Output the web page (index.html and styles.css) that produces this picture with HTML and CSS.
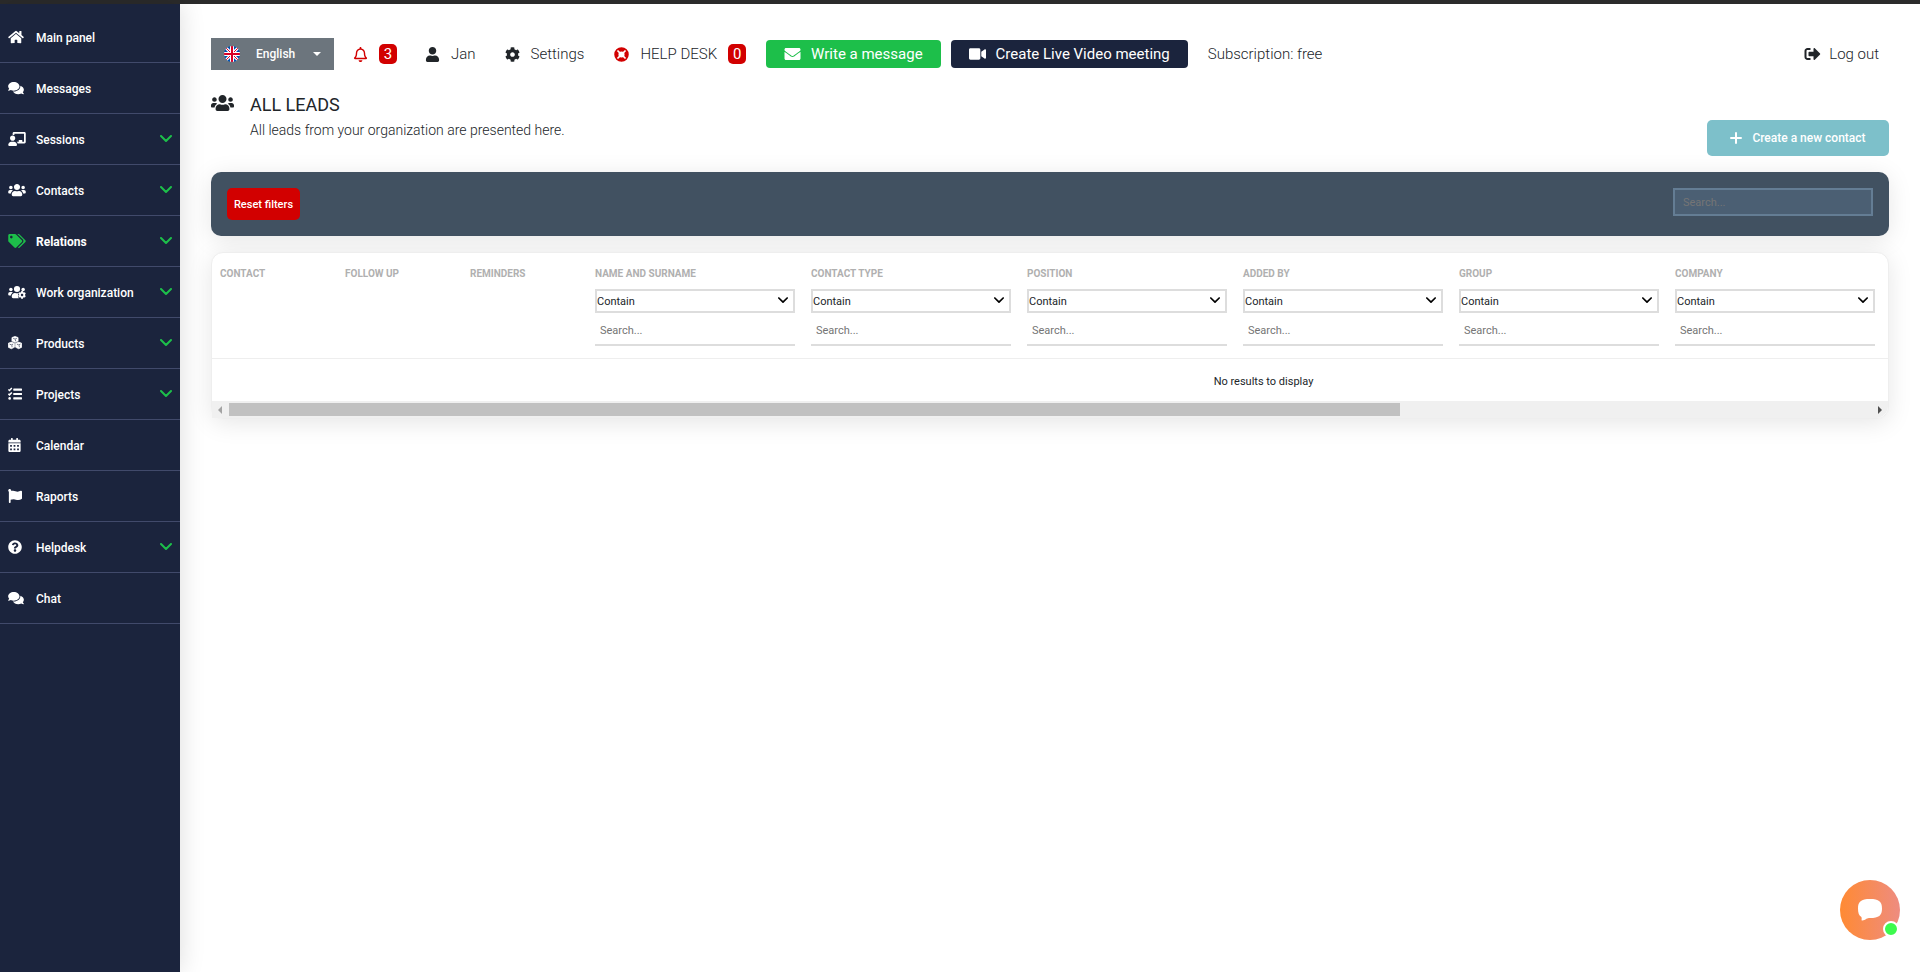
FILE: index.html
```html
<!DOCTYPE html>
<html lang="en">
<head>
<meta charset="utf-8">
<title>All leads</title>
<link rel="stylesheet" href="styles.css">
</head>
<body>
<svg class="sprite" aria-hidden="true">
  <symbol id="home" viewBox="0 0 576 512"><path d="M280.37 148.26L96 300.11V464a16 16 0 0 0 16 16l112.06-.29a16 16 0 0 0 15.92-16V368a16 16 0 0 1 16-16h64a16 16 0 0 1 16 16v95.64a16 16 0 0 0 16 16.05L464 480a16 16 0 0 0 16-16V300L295.67 148.26a12.19 12.19 0 0 0-15.3 0zM571.6 251.47L488 182.56V44.05a12 12 0 0 0-12-12h-56a12 12 0 0 0-12 12v72.61L318.47 43a48 48 0 0 0-61 0L4.34 251.47a12 12 0 0 0-1.6 16.9l25.5 31A12 12 0 0 0 45.15 301l235.22-193.74a12.19 12.19 0 0 1 15.3 0L530.9 301a12 12 0 0 0 16.9-1.6l25.5-31a12 12 0 0 0-1.7-16.93z"/></symbol>
  <symbol id="comments" viewBox="0 0 576 512"><path d="M416 192c0-88.4-93.1-160-208-160S0 103.6 0 192c0 34.3 14.1 65.9 38 92-13.4 30.2-35.5 54.2-35.8 54.5-2.2 2.3-2.8 5.7-1.5 8.7S4.8 352 8 352c36.6 0 66.9-12.3 88.7-25 32.2 15.7 70.3 25 111.3 25 114.9 0 208-71.6 208-160zm122 220c23.9-26 38-57.7 38-92 0-66.9-53.5-124.2-129.3-148.1.9 6.6 1.3 13.3 1.3 20.1 0 105.9-107.7 192-240 192-10.8 0-21.3-.8-31.7-1.9C207.8 439.6 281.8 480 368 480c41 0 79.1-9.2 111.3-25 21.8 12.7 52.1 25 88.7 25 3.2 0 6.1-1.9 7.3-4.8 1.3-2.9.7-6.3-1.5-8.7-.3-.3-22.4-24.2-35.8-54.5z"/></symbol>
  <symbol id="teacher" viewBox="0 0 640 512"><path d="M208 352c-2.39 0-4.78.35-7.06 1.09C187.98 357.3 174.35 360 160 360c-14.35 0-27.98-2.7-40.95-6.91-2.28-.74-4.66-1.09-7.05-1.09C49.94 352-.33 402.48 0 464.62.14 490.88 21.73 512 48 512h224c26.27 0 47.86-21.12 48-47.38.33-62.14-49.94-112.62-112-112.62zm-48-32c53.02 0 96-42.98 96-96s-42.98-96-96-96-96 42.98-96 96 42.98 96 96 96zM592 0H208c-26.47 0-48 22.25-48 49.59V96c23.42 0 45.1 6.78 64 17.8V64h352v288h-64v-64H384v64h-76.24c19.1 16.69 33.12 38.73 39.69 64H592c26.47 0 48-22.25 48-49.59V49.59C640 22.25 618.47 0 592 0z"/></symbol>
  <symbol id="users" viewBox="0 0 640 512"><path d="M96 224c35.3 0 64-28.7 64-64s-28.7-64-64-64-64 28.7-64 64 28.7 64 64 64zm448 0c35.3 0 64-28.7 64-64s-28.7-64-64-64-64 28.7-64 64 28.7 64 64 64zm32 32h-64c-17.6 0-33.5 7.1-45.1 18.6 40.3 22.1 68.9 62 75.1 109.4h66c17.7 0 32-14.3 32-32v-32c0-35.3-28.7-64-64-64zm-256 0c61.9 0 112-50.1 112-112S381.9 32 320 32 208 82.1 208 144s50.1 112 112 112zm76.8 32h-8.3c-20.8 10-43.9 16-68.5 16s-47.6-6-68.5-16h-8.3C179.6 288 128 339.6 128 403.2V432c0 26.5 21.5 48 48 48h288c26.5 0 48-21.5 48-48v-28.8c0-63.6-51.6-115.2-115.2-115.2zm-223.7-13.4C161.5 263.1 145.6 256 128 256H64c-35.3 0-64 28.7-64 64v32c0 17.7 14.3 32 32 32h65.9c6.3-47.4 34.9-87.3 75.2-109.4z"/></symbol>
  <symbol id="tags" viewBox="0 0 640 512"><path d="M497.941 225.941L286.059 14.059A48 48 0 0 0 252.118 0H48C21.49 0 0 21.49 0 48v204.118a48 48 0 0 0 14.059 33.941l211.882 211.882c18.744 18.745 49.136 18.746 67.882 0l204.118-204.118c18.745-18.745 18.745-49.137 0-67.882zM112 160c-26.51 0-48-21.49-48-48s21.49-48 48-48 48 21.49 48 48-21.49 48-48 48zm513.941 133.823L421.823 497.941c-18.745 18.745-49.137 18.745-67.882 0l-.36-.36L527.64 323.522c16.999-16.999 26.36-39.6 26.36-63.64s-9.362-46.641-26.36-63.64L331.397 0h48.721a48 48 0 0 1 33.941 14.059l211.882 211.882c18.745 18.745 18.745 49.137 0 67.882z"/></symbol>
  <symbol id="cog" viewBox="0 0 512 512"><path d="M487.4 315.7l-42.6-24.6c4.3-23.2 4.3-47 0-70.2l42.6-24.6c4.9-2.8 7.1-8.6 5.5-14-11.1-35.6-30-67.8-54.7-94.6-3.8-4.1-10-5.1-14.8-2.3L380.8 110c-17.9-15.4-38.5-27.3-60.8-35.1V25.8c0-5.6-3.9-10.5-9.4-11.7-36.7-8.2-74.3-7.8-109.2 0-5.5 1.2-9.4 6.1-9.4 11.7V75c-22.2 7.9-42.8 19.8-60.8 35.1L88.7 85.5c-4.9-2.8-11-1.9-14.8 2.3-24.7 26.7-43.6 58.9-54.7 94.6-1.7 5.4.6 11.2 5.5 14L67.3 221c-4.3 23.2-4.3 47 0 70.2l-42.6 24.6c-4.9 2.8-7.1 8.6-5.5 14 11.1 35.6 30 67.8 54.7 94.6 3.8 4.1 10 5.1 14.8 2.3l42.6-24.6c17.9 15.4 38.5 27.3 60.8 35.1v49.2c0 5.6 3.9 10.5 9.4 11.7 36.7 8.2 74.3 7.8 109.2 0 5.5-1.2 9.4-6.1 9.4-11.7v-49.2c22.2-7.9 42.8-19.8 60.8-35.1l42.6 24.6c4.9 2.8 11 1.9 14.8-2.3 24.7-26.7 43.6-58.9 54.7-94.6 1.5-5.5-.7-11.3-5.6-14.1zM256 336c-44.1 0-80-35.9-80-80s35.9-80 80-80 80 35.9 80 80-35.9 80-80 80z"/></symbol>
  <symbol id="users-cog" viewBox="0 0 640 512"><circle cx="96" cy="160" r="64"/><circle cx="544" cy="160" r="64"/><circle cx="320" cy="144" r="112"/><path d="M173 274.600C161.500 263.100 145.600 256 128 256H64c-35.300 0-64 28.700-64 64v32c0 17.700 14.300 32 32 32h66c6.300-47.400 34.900-87.300 75-109.400zM252 288h-9C180 288 128 340 128 403v29c0 26.500 21.500 48 48 48h212c-10-10-17-24-24-40-10-18-6-30 6-40l10-8v-20l-10-8c-12-10-14-22-8-40 6-12 10-22 16-32-19 8-40 12-58 12-25 0-47-6-68-16z"/><svg x="360" y="218" width="290" height="290" viewBox="0 0 512 512"><use href="#cog"/></svg></symbol>
  <symbol id="cubes" viewBox="0 0 512 512"><path d="M256 14l112 44v126l-112 52-112-52V58zM122 222l114 46v142l-114 56L8 410V268zM390 222l114 46v142l-114 56-114-56V268z" stroke="currentColor" stroke-width="26" stroke-linejoin="round"/><path d="M190 88l66 26 66-26M276 190v-60M56 296l66 28 66-28M146 410v-70M324 296l66 28 66-28M414 410v-70" fill="none" class="cut" stroke-width="22"/></symbol>
  <symbol id="tasks" viewBox="0 0 512 512"><path d="M208 56h288a16 16 0 0 1 16 16v48a16 16 0 0 1-16 16H208a16 16 0 0 1-16-16V72a16 16 0 0 1 16-16zM208 216h288a16 16 0 0 1 16 16v48a16 16 0 0 1-16 16H208a16 16 0 0 1-16-16v-48a16 16 0 0 1 16-16zM208 376h288a16 16 0 0 1 16 16v48a16 16 0 0 1-16 16H208a16 16 0 0 1-16-16v-48a16 16 0 0 1 16-16z"/><circle cx="60" cy="416" r="48"/><path d="M14 88l40 40 86-88M14 248l40 40 86-88" fill="none" stroke="currentColor" stroke-width="54"/></symbol>
  <symbol id="calendar" viewBox="0 0 448 512"><path fill-rule="evenodd" d="M0 464c0 26.500 21.500 48 48 48h352c26.500 0 48-21.500 48-48V192H0zM64 256h64v64H64zM192 256h64v64h-64zM320 256h64v64h-64zM64 384h64v64H64zM192 384h64v64h-64zM320 384h64v64h-64zM400 64h-48V16c0-8.800-7.200-16-16-16h-32c-8.800 0-16 7.200-16 16v48H160V16c0-8.800-7.200-16-16-16h-32c-8.800 0-16 7.200-16 16v48H48C21.500 64 0 85.500 0 112v48h448v-48c0-26.500-21.500-48-48-48z"/></symbol>
  <symbol id="flag" viewBox="0 0 512 512"><path d="M349.565 98.783C295.978 98.783 251.721 64 184.348 64c-24.955 0-47.309 4.384-68.045 12.013a55.947 55.947 0 0 0 3.586-23.562C118.117 24.015 94.806 1.206 66.338.048 34.345-1.254 8 24.296 8 56c0 19.026 9.497 35.825 24 45.945V488c0 13.255 10.745 24 24 24h16c13.255 0 24-10.745 24-24v-94.4c28.311-12.064 63.582-22.122 114.435-22.122 53.588 0 97.844 34.783 165.217 34.783 48.169 0 86.667-16.294 122.505-40.858C506.84 359.452 512 349.571 512 339.045v-243.1c0-23.393-24.269-38.87-45.485-29.016-34.338 15.948-76.454 31.854-116.95 31.854z"/></symbol>
  <symbol id="question" viewBox="0 0 512 512"><path d="M504 256c0 136.997-111.043 248-248 248S8 392.997 8 256C8 119.083 119.043 8 256 8s248 111.083 248 248zM262.655 90c-54.497 0-89.255 22.957-116.549 63.758-3.536 5.286-2.353 12.415 2.715 16.258l34.699 26.31c5.205 3.947 12.621 3.008 16.665-2.122 17.864-22.658 30.113-35.797 57.303-35.797 20.429 0 45.698 13.148 45.698 32.958 0 14.976-12.363 22.667-32.534 33.976C247.128 238.528 216 254.941 216 296v4c0 6.627 5.373 12 12 12h56c6.627 0 12-5.373 12-12v-1.333c0-28.462 83.186-29.647 83.186-106.667 0-58.002-60.165-102-116.531-102zM256 338c-25.365 0-46 20.635-46 46 0 25.364 20.635 46 46 46s46-20.636 46-46c0-25.365-20.635-46-46-46z"/></symbol>
  <symbol id="user" viewBox="0 0 448 512"><path d="M224 256c70.7 0 128-57.3 128-128S294.7 0 224 0 96 57.3 96 128s57.3 128 128 128zm89.6 32h-16.7c-22.2 10.2-46.9 16-72.9 16s-50.6-5.8-72.9-16h-16.7C60.2 288 0 348.2 0 422.4V464c0 26.5 21.5 48 48 48h352c26.5 0 48-21.5 48-48v-41.6c0-74.2-60.2-134.4-134.4-134.4z"/></symbol>
  <symbol id="bell" viewBox="0 0 448 512"><path d="M439.39 362.29c-19.32-20.76-55.47-51.99-55.47-154.29 0-77.7-54.48-139.9-127.94-155.16V32c0-17.67-14.32-32-31.98-32s-31.98 14.33-31.98 32v20.84C118.56 68.1 64.08 130.3 64.08 208c0 102.3-36.15 133.53-55.47 154.29-6 6.45-8.66 14.16-8.61 21.71.11 16.4 12.98 32 32.1 32h383.8c19.12 0 32-15.6 32.1-32 .05-7.55-2.61-15.27-8.61-21.71zM67.53 368c21.22-27.97 44.42-74.33 44.53-159.42 0-.2-.06-.38-.06-.58 0-61.86 50.14-112 112-112s112 50.14 112 112c0 .2-.06.38-.06.58.11 85.1 23.31 131.46 44.53 159.42H67.53zM224 512c35.32 0 63.97-28.65 63.97-64H160.03c0 35.35 28.65 64 63.97 64z"/></symbol>
  <symbol id="ring" viewBox="0 0 512 512"><circle cx="256" cy="256" r="176" fill="none" stroke="currentColor" stroke-width="144"/><path d="M118 118l80 80M394 118l-80 80M118 394l80-80M394 394l-80-80" fill="none" stroke="#fff" stroke-width="56"/></symbol>
  <symbol id="envelope" viewBox="0 0 512 512"><path d="M502.3 190.8c3.9-3.1 9.7-.2 9.7 4.7V400c0 26.5-21.5 48-48 48H48c-26.5 0-48-21.5-48-48V195.6c0-5 5.7-7.8 9.7-4.7 22.4 17.4 52.1 39.5 154.1 113.6 21.1 15.4 56.7 47.8 92.2 47.6 35.7.3 72-32.8 92.3-47.6 102-74.1 131.6-96.3 154-113.7zM256 320c23.2.4 56.6-29.2 73.4-41.4 132.7-96.3 142.8-104.7 173.4-128.7 5.8-4.5 9.2-11.5 9.2-18.9v-19c0-26.5-21.5-48-48-48H48c-26.5 0-48 21.5-48 48v19c0 7.4 3.4 14.3 9.2 18.9 30.6 23.9 40.7 32.4 173.4 128.7 16.8 12.2 50.2 41.8 73.4 41.4z"/></symbol>
  <symbol id="video" viewBox="0 0 576 512"><path d="M336.2 64H47.8C21.4 64 0 85.4 0 111.8v288.4C0 426.6 21.4 448 47.8 448h288.4c26.4 0 47.8-21.4 47.8-47.8V111.8c0-26.4-21.4-47.8-47.8-47.8zm189.4 37.7L416 177.3v157.4l109.6 75.5c21.2 14.6 50.4-.3 50.4-25.8V127.5c0-25.4-29.1-40.4-50.4-25.8z"/></symbol>
  <symbol id="signout" viewBox="0 0 512 512"><path d="M497 273L329 441c-15 15-41 4.500-41-17v-96H152c-13.300 0-24-10.700-24-24v-96c0-13.300 10.700-24 24-24h136V88c0-21.400 25.900-32 41-17l168 168c9.300 9.400 9.300 24.600 0 34zM192 436v-40c0-6.600-5.400-12-12-12H96c-17.700 0-32-14.300-32-32V160c0-17.700 14.300-32 32-32h84c6.600 0 12-5.400 12-12V76c0-6.600-5.400-12-12-12H96c-53 0-96 43-96 96v192c0 53 43 96 96 96h84c6.600 0 12-5.400 12-12z"/></symbol>
  <symbol id="plus" viewBox="0 0 12 12"><path d="M6 1v10M1 6h10" stroke="currentColor" stroke-width="2" stroke-linecap="round"/></symbol>
  <symbol id="chevron" viewBox="0 0 12 8"><path d="M1 1l5 5 5-5" fill="none" stroke="currentColor" stroke-width="2" stroke-linecap="round" stroke-linejoin="round"/></symbol>
  <symbol id="flag-uk" viewBox="0 0 16 16"><clipPath id="disc"><circle cx="8" cy="8" r="8"/></clipPath><g clip-path="url(#disc)" fill="none"><path d="M0 0h16v16H0z" fill="#0052b4"/><path d="M1 1l14 14M15 1L1 15" stroke="#fff" stroke-width="3"/><path d="M1 1l14 14M15 1L1 15" stroke="#d80027" stroke-width="1"/><path d="M8 0v16M0 8h16" stroke="#fff" stroke-width="4"/><path d="M8 0v16M0 8h16" stroke="#d80027" stroke-width="2"/></g></symbol>
  <symbol id="bubble" viewBox="0 0 24 22"><path d="M12 0c9 0 12 2.500 12 9.500S21 19 12 19c-1.500 0-2.600.1-3.600.8-1.400 1-3 1.900-4.400 1.700-1-.2.2-1.500-.6-3.500C1 16.500 0 14 0 9.500 0 2.500 3 0 12 0z"/></symbol>
</svg>
<div class="top-strip"></div>
<div class="app">
  <nav class="sidebar" aria-label="Main menu">
    <a class="item" href="#"><svg class="icon w16"><use href="#home"/></svg><span>Main panel</span></a>
    <a class="item" href="#"><svg class="icon w16"><use href="#comments"/></svg><span>Messages</span></a>
    <a class="item" href="#"><svg class="icon w18"><use href="#teacher"/></svg><span>Sessions</span><svg class="chev"><use href="#chevron"/></svg></a>
    <a class="item" href="#"><svg class="icon w18"><use href="#users"/></svg><span>Contacts</span><svg class="chev"><use href="#chevron"/></svg></a>
    <a class="item active" href="#"><svg class="icon w18"><use href="#tags"/></svg><span>Relations</span><svg class="chev"><use href="#chevron"/></svg></a>
    <a class="item" href="#"><svg class="icon w18"><use href="#users-cog"/></svg><span>Work organization</span><svg class="chev"><use href="#chevron"/></svg></a>
    <a class="item" href="#"><svg class="icon w14"><use href="#cubes"/></svg><span>Products</span><svg class="chev"><use href="#chevron"/></svg></a>
    <a class="item" href="#"><svg class="icon w14"><use href="#tasks"/></svg><span>Projects</span><svg class="chev"><use href="#chevron"/></svg></a>
    <a class="item" href="#"><svg class="icon w13"><use href="#calendar"/></svg><span>Calendar</span></a>
    <a class="item" href="#"><svg class="icon w14"><use href="#flag"/></svg><span>Raports</span></a>
    <a class="item" href="#"><svg class="icon w14"><use href="#question"/></svg><span>Helpdesk</span><svg class="chev"><use href="#chevron"/></svg></a>
    <a class="item" href="#"><svg class="icon w16"><use href="#comments"/></svg><span>Chat</span></a>
  </nav>
  <main class="main">
    <header class="topbar">
      <button class="lang" type="button"><svg class="flag"><use href="#flag-uk"/></svg><span>English</span><i class="caret"></i></button>
      <a class="link bell" href="#" aria-label="Notifications"><svg class="ticon red"><use href="#bell"/></svg><span class="badge">3</span></a>
      <a class="link jan" href="#"><svg class="ticon"><use href="#user"/></svg>Jan</a>
      <a class="link settings" href="#"><svg class="ticon"><use href="#cog"/></svg>Settings</a>
      <a class="link help" href="#"><svg class="ticon red"><use href="#ring"/></svg>HELP DESK<span class="badge">0</span></a>
      <button class="pill green" type="button"><svg class="picon"><use href="#envelope"/></svg>Write a message</button>
      <button class="pill navy" type="button"><svg class="picon"><use href="#video"/></svg>Create Live Video meeting</button>
      <span class="plan">Subscription: free</span>
      <a class="link logout" href="#"><svg class="picon"><use href="#signout"/></svg>Log out</a>
    </header>
    <div class="heading">
      <svg class="hicon"><use href="#users"/></svg>
      <div class="titles"><h1>ALL LEADS</h1><p>All leads from your organization are presented here.</p></div>
      <button class="create" type="button"><svg class="plus"><use href="#plus"/></svg>Create a new contact</button>
    </div>
    <div class="filters">
      <button class="reset" type="button">Reset filters</button>
      <input class="global-search" type="text" placeholder="Search..." aria-label="Search">
    </div>
    <section class="card">
      <div class="scroller">
        <table>
          <thead><tr>
            <th class="narrow">CONTACT</th><th class="narrow">FOLLOW UP</th><th class="narrow">REMINDERS</th>
            <th><label for="f1">NAME AND SURNAME</label><span class="sel"><select id="f1"><option>Contain</option></select><svg><use href="#chevron"/></svg></span><input type="text" placeholder="Search..." aria-label="Name and surname"></th>
            <th><label for="f2">CONTACT TYPE</label><span class="sel"><select id="f2"><option>Contain</option></select><svg><use href="#chevron"/></svg></span><input type="text" placeholder="Search..." aria-label="Contact type"></th>
            <th><label for="f3">POSITION</label><span class="sel"><select id="f3"><option>Contain</option></select><svg><use href="#chevron"/></svg></span><input type="text" placeholder="Search..." aria-label="Position"></th>
            <th><label for="f4">ADDED BY</label><span class="sel"><select id="f4"><option>Contain</option></select><svg><use href="#chevron"/></svg></span><input type="text" placeholder="Search..." aria-label="Added by"></th>
            <th><label for="f5">GROUP</label><span class="sel"><select id="f5"><option>Contain</option></select><svg><use href="#chevron"/></svg></span><input type="text" placeholder="Search..." aria-label="Group"></th>
            <th><label for="f6">COMPANY</label><span class="sel"><select id="f6"><option>Contain</option></select><svg><use href="#chevron"/></svg></span><input type="text" placeholder="Search..." aria-label="Company"></th>
            <th></th><th></th>
          </tr></thead>
          <tbody><tr><td colspan="11">No results to display</td></tr></tbody>
        </table>
      </div>
      <div class="scrollbar"><i class="arrow left"></i><div class="track"><div class="thumb"></div></div><i class="arrow right"></i></div>
    </section>
  </main>
</div>
<button class="chat" type="button" aria-label="Open chat"><svg><use href="#bubble"/></svg><i class="online"></i></button>
</body>
</html>
```
FILE: styles.css
```css
* { box-sizing: border-box; }
body { margin: 0; font-family: Roboto, "Liberation Sans", sans-serif; color: #212529; background: #fff; display: flex; flex-direction: column; min-height: 100vh; }
button, input, select { font-family: inherit; margin: 0; }
button { cursor: pointer; border: 0; }
a { color: inherit; text-decoration: none; }
svg { fill: currentColor; flex: none; }
.sprite { position: absolute; width: 0; height: 0; }
.top-strip { height: 4px; background: #2b2b2b; }
.app { display: flex; flex: 1; }

.sidebar { width: 180px; flex: none; padding-top: 8px; background: #1b243d; color: #fff; box-shadow: 0 0 24px rgba(0, 0, 0, .14); }
.item { display: flex; align-items: center; height: 51px; padding: 0 8px; border-bottom: 1px solid #414a6b; font-size: 12px; font-weight: 500; }
.item span { flex: 1; padding-top: 2px; white-space: nowrap; }
.icon { height: 14px; }
.w13 { width: 13px; margin-right: 15px; }
.w14 { width: 14px; margin-right: 14px; }
.w16 { width: 16px; margin-right: 12px; }
.w18 { width: 18px; margin-right: 10px; }
.cut { stroke: #1b243d; }
.chev { width: 12px; height: 8px; color: #1dbf4a; }
.active { font-weight: 700; }
.active .icon { color: #1dbf4a; }

.main { flex: 1; min-width: 0; padding: 34px 31px 0; }
.topbar { display: flex; align-items: center; height: 32px; font-size: 15px; font-weight: 300; white-space: nowrap; }
.lang { display: flex; align-items: center; width: 123px; height: 32px; padding: 0 13px; background: #6c757d; color: #fff; font-size: 12px; font-weight: 500; }
.flag { width: 16px; height: 16px; margin-right: 16px; }
.caret { margin-left: auto; border: 4px solid transparent; border-top-color: #fff; border-bottom: 0; }
.link { display: flex; align-items: center; }
.ticon { width: 15px; height: 15px; margin-right: 11px; }
.red { color: #d20000; }
.badge { display: inline-flex; align-items: center; justify-content: center; width: 18px; height: 20px; border-radius: 5px; background: #d20000; color: #fff; font-weight: 400; }
.bell { margin-left: 19px; }
.jan { margin-left: 28px; }
.settings { margin-left: 29px; }
.help { margin-left: 30px; }
.help .badge { margin-left: 11px; }
.pill { display: flex; align-items: center; height: 28px; padding: 0 18px; border-radius: 4px; color: #fff; font-size: 15px; white-space: nowrap; }
.green { margin-left: 20px; background: #1dbf4a; }
.navy { margin-left: 10px; background: #1b243d; }
.picon { width: 17px; height: 16px; margin-right: 10px; }
.plan { margin-left: 20px; }
.logout { margin-left: auto; margin-right: 10px; }
.logout .picon { margin-right: 8px; }

.heading { display: flex; height: 102px; padding-top: 23px; }
.hicon { width: 23px; height: 20px; margin-right: 16px; }
.titles { flex: 1; }
h1 { margin: 0; font-size: 18px; line-height: 24px; font-weight: 400; }
p { margin: 0; font-size: 14px; line-height: 26px; font-weight: 300; }
.create { display: flex; align-items: center; justify-content: center; width: 182px; height: 36px; margin-top: 27px; border-radius: 5px; background: #7dc0ca; color: #fff; font-size: 12px; font-weight: 500; }
.plus { width: 12px; height: 12px; margin-right: 10px; }

.filters { display: flex; align-items: flex-start; justify-content: space-between; height: 64px; padding: 16px; border-radius: 10px; background: #415161; box-shadow: 0 4px 24px rgba(0, 0, 0, .1); }
.reset { width: 73px; height: 32px; padding: 0; border-radius: 5px; background: #d20000; color: #fff; font-size: 11px; font-weight: 500; }
.global-search { width: 200px; height: 28px; padding: 0 8px; border: 2px solid #647d94; background: #4b5f73; color: #fff; font-size: 11px; }
::placeholder { color: #757575; opacity: 1; }

.card { margin-top: 16px; border: 1px solid #eee; border-radius: 12px; background: #fff; box-shadow: 0 4px 24px rgba(0, 0, 0, .1); }
.scroller { overflow: hidden; }
table { width: 2103px; table-layout: fixed; border-collapse: collapse; }
th { width: 216px; height: 105px; padding: 13px 8px 0; vertical-align: top; text-align: left; border-bottom: 1px solid #eee; color: #b0b0b0; font-size: 10px; line-height: 16px; font-weight: 700; }
.narrow { width: 125px; }
label { display: block; }
.sel { display: block; position: relative; margin-top: 7px; }
.sel svg { position: absolute; right: 7px; top: 8px; width: 10px; height: 7px; color: #000; pointer-events: none; }
select { display: block; appearance: none; width: 100%; height: 24px; padding: 0; border: 2px solid #ddd; border-radius: 0; background: #fff; color: #212529; font-size: 11px; }
th input { display: block; width: 100%; height: 33px; padding: 4px 5px 0; border: 0; border-bottom: 2px solid #ddd; background: transparent; font-size: 11px; }
td { height: 43px; padding: 3px 0 0; text-align: center; font-size: 11px; }
.scrollbar { display: flex; align-items: center; height: 17px; padding: 0 6px; background: #f0f0f0; border-radius: 0 0 12px 0; }
.track { flex: 1; margin: 0 7px; }
.thumb { width: 71.3%; height: 13px; background: #c1c1c1; }
.arrow { border: 4px solid transparent; }
.left { border-right-color: #a3a3a3; border-left: 0; }
.right { border-left-color: #505050; border-right: 0; }

.chat { position: fixed; right: 20px; bottom: 32px; display: flex; align-items: center; justify-content: center; width: 60px; height: 60px; padding: 0; border-radius: 50%; background: linear-gradient(90deg, #ff8a33, #ee8c80); color: #fff; }
.chat svg { width: 24px; height: 22px; }
.online { position: absolute; right: 1px; bottom: 3px; width: 16px; height: 16px; border: 2px solid #fff; border-radius: 50%; background: #3dfa4e; }
```
